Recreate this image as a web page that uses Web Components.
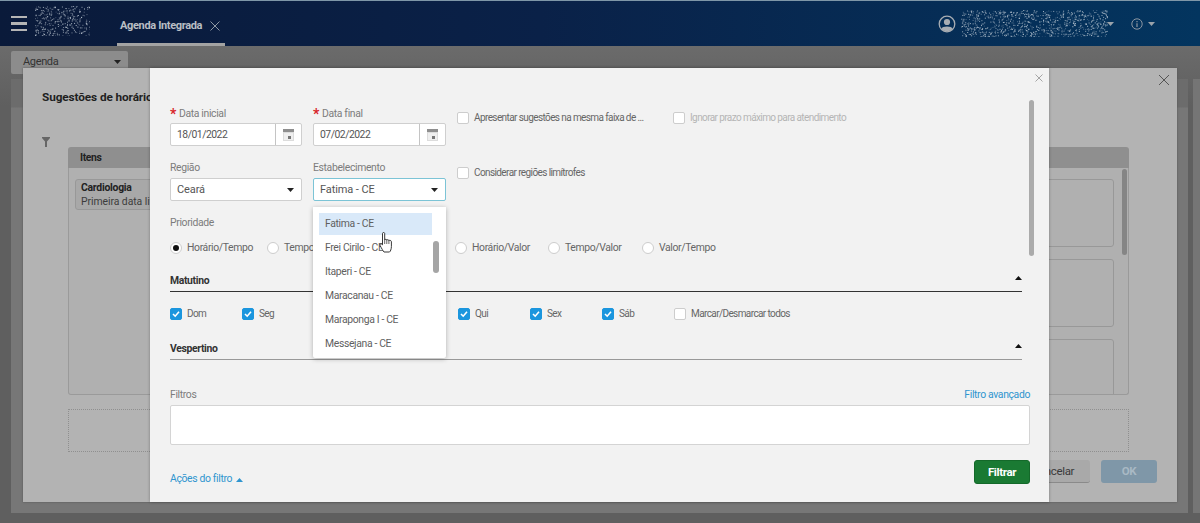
<!DOCTYPE html>
<html lang="pt-BR">
<head>
<meta charset="utf-8">
<title>Agenda Integrada</title>
<style>
  html, body { margin: 0; height: 523px; overflow: hidden; background: #636363; }
  body { font: 10.4px/14px Roboto, Lato, sans-serif; letter-spacing: -.35px; color: #555; }
</style>
</head>
<body>
<app-shell></app-shell>

<script>
// small seeded random so the blurred-out patches stay the same between runs
function seeded(seed) {
    return () => {
        seed = (seed * 16807) % 2147483647;
        return seed / 2147483647;
    };
}

const caret = (dir, color) => {
    const d = dir === 'up' ? 'M0 4 L3.5 0 L7 4Z' : 'M0 0 L7 0 L3.5 4Z';
    return `<svg width="7" height="4" viewBox="0 0 7 4"><path d="${d}" fill="${color}"/></svg>`;
};

class NoisePatch extends HTMLElement {
    connectedCallback() {
        const w = +this.getAttribute('w');
        const h = +this.getAttribute('h');
        const count = +this.getAttribute('count');
        const rnd = seeded(+this.getAttribute('seed') || 77);
        let dots = '';
        for (let i = 0; i < count; i++) {
            const x = (rnd() * w).toFixed(1);
            const y = (rnd() * h).toFixed(1);
            const o = (0.25 + rnd() * 0.6).toFixed(2);
            dots += `<rect x="${x}" y="${y}" width="1" height="1" fill="#cfd8e0" opacity="${o}"/>`;
        }
        const shadow = this.attachShadow({ mode: 'open' });
        shadow.innerHTML = `
            <style>:host { display: block; line-height: 0; }</style>
            <svg width="${w}" height="${h}">${dots}</svg>`;
    }
}

class AppHeader extends HTMLElement {
    constructor() {
        super();
        const shadow = this.attachShadow({ mode: 'open' });
        shadow.innerHTML = `
            <style>
                :host {
                    display: flex;
                    align-items: center;
                    height: 45px;
                    border-top: 1px solid #7f97a8;
                    background: linear-gradient(90deg, #0a1a3a 0%, #0a2148 45%, #03355f 100%);
                    color: #b9bec4;
                }
                .burger { width: 16px; margin: 0 8px 0 11px; display: grid; gap: 4px; }
                .burger i { display: block; height: 2.5px; background: #b5b5b5; }
                .logo { margin-top: -6px; }
                .tab {
                    align-self: stretch;
                    box-sizing: border-box;
                    width: 108px;
                    margin-left: 27px;
                    padding: 18px 0 0 3px;
                    border-bottom: 3px solid #a3a3a3;
                    font-size: 11px;
                    font-weight: 700;
                    white-space: nowrap;
                    display: flex;
                    gap: 8px;
                }
                .tab svg { margin-top: 2px; flex: none; }
                .right { margin-left: auto; display: flex; align-items: center; }
                .user { margin-right: 5px; }
                .info { margin: 0 5px 0 17px; }
                .last { margin-right: 45px; }
            </style>
            <div class="burger"><i></i><i></i><i></i></div>
            <noise-patch class="logo" w="55" h="30" count="330" seed="91"></noise-patch>
            <div class="tab">
                Agenda Integrada
                <svg width="10" height="10" viewBox="0 0 10 10"><path d="M.5 .5 L9.5 9.5 M9.5 .5 L.5 9.5" stroke="#8d97a3" fill="none"/></svg>
            </div>
            <div class="right">
                <svg class="user" width="18" height="18" viewBox="0 0 18 18">
                    <circle cx="9" cy="9" r="7.8" fill="none" stroke="#a8adb3" stroke-width="1.3"/>
                    <circle cx="9" cy="7" r="3.1" fill="#a8adb3"/>
                    <path d="M3.4 14 C4 10.8 14 10.8 14.6 14 C12 17 6 17 3.4 14Z" fill="#a8adb3"/>
                </svg>
                <noise-patch w="147" h="27" count="900" seed="4242"></noise-patch>
                <span style="margin:0 0 0 -1px;line-height:0">${caret('down', '#9aa2aa')}</span>
                <svg class="info" width="12" height="12" viewBox="0 0 12 12">
                    <circle cx="6" cy="6" r="5.2" fill="none" stroke="#8c96a2"/>
                    <path d="M6 3 V4.2 M6 5.2 V9" stroke="#8c96a2" stroke-width="1.2"/>
                </svg>
                <span class="last" style="line-height:0">${caret('down', '#9aa2aa')}</span>
            </div>`;
    }
}

class DottedBox extends HTMLElement {
    constructor() {
        super();
        this.attachShadow({ mode: 'open' }).innerHTML = `
            <style>
                :host { display: block; height: 41px; border: 1px dotted #8f8f8f; }
            </style>`;
    }
}

class ResultPanel extends HTMLElement {
    constructor() {
        super();
        const shadow = this.attachShadow({ mode: 'open' });
        shadow.innerHTML = `
            <style>
                :host { display: block; position: relative; }
                .head {
                    height: 21px;
                    padding-left: 12px;
                    background: #8f8f8f;
                    border-radius: 3px 3px 0 0;
                    color: #222;
                    font-weight: 700;
                    line-height: 21px;
                }
                .body {
                    box-sizing: border-box;
                    height: 227px;
                    padding: 11px 14px 0 6px;
                    background: #b0b0b0;
                    border: solid #9a9a9a;
                    border-width: 0 1px 1px 1px;
                    border-radius: 0 0 3px 3px;
                    overflow: hidden;
                    display: grid;
                    grid-auto-rows: 68px;
                    gap: 12px;
                }
                .bar {
                    position: absolute;
                    right: 2px;
                    top: 22px;
                    width: 5px;
                    height: 86px;
                    border-radius: 3px;
                    background: #858585;
                }
            </style>
            <div class="head"><slot name="title"></slot></div>
            <div class="body"><slot></slot></div>
            <div class="bar"></div>`;
    }
}

class ResultCard extends HTMLElement {
    constructor() {
        super();
        const shadow = this.attachShadow({ mode: 'open' });
        shadow.innerHTML = `
            <style>
                :host {
                    display: block;
                    box-sizing: border-box;
                    padding: 1px 5px;
                    border: 1px solid #989898;
                    border-radius: 3px;
                    color: #3c3c3c;
                    font-size: 10.4px;
                    letter-spacing: -.05px;
                    white-space: nowrap;
                }
                :host([compact]) { height: 31px; background: #a8a8a8; }
                ::slotted(b) { display: block; color: #222; letter-spacing: -.25px; }
            </style>
            <slot></slot>`;
    }
}

class SuggestionModal extends HTMLElement {
    constructor() {
        super();
        const shadow = this.attachShadow({ mode: 'open' });
        shadow.innerHTML = `
            <style>
                :host {
                    position: absolute;
                    left: 23px;
                    top: 68px;
                    box-sizing: border-box;
                    width: 1154px;
                    height: 434px;
                    padding: 22px 19px 0 19px;
                    background: #b3b3b3;
                    box-shadow: 0 0 2px #555;
                }
                h2 { margin: 0; font-size: 11.8px; letter-spacing: -.1px; line-height: 14px; color: #1f1f1f; }
                .close { position: absolute; right: 7px; top: 6px; }
                .content { display: grid; grid-template-columns: 26px 1fr; margin: 33px 29px 0 0; }
                .funnel { line-height: 0; }
                .panels { margin-top: 10px; display: grid; grid-template-columns: 522px 524px; gap: 15px; }
                .drops { margin-top: 14px; display: grid; grid-template-columns: 522px 524px; gap: 15px; }
                .btns { margin-top: 8px; display: flex; justify-content: flex-end; gap: 11px; margin-right: 1px; }
                .btn {
                    box-sizing: border-box;
                    width: 74px;
                    height: 23px;
                    border-radius: 3px;
                    font-size: 11.5px;
                    line-height: 22px;
                    text-align: center;
                }
                .cancel { background: #a9a9a9; color: #3a3a3a; border-bottom: 1px solid #8a8a8a; }
                .ok { width: 56px; background: #7f97a8; color: #a9b9c4; font-weight: 700; }
            </style>
            <h2>Sugestões de horário</h2>
            <svg class="close" width="12" height="12" viewBox="0 0 12 12"><path d="M1 1 L11 11 M11 1 L1 11" stroke="#555" fill="none"/></svg>
            <div class="content">
                <svg class="funnel" width="8" height="10" viewBox="0 0 8 10"><path d="M0 0 H8 V1 L5 4.5 V10 H3 V4.5 L0 1Z" fill="#666"/></svg>
                <div>
                    <div class="panels">
                        <result-panel>
                            <span slot="title">Itens</span>
                            <result-card compact><b>Cardiologia</b>Primeira data livre</result-card>
                        </result-panel>
                        <result-panel>
                            <result-card></result-card>
                            <result-card></result-card>
                            <result-card></result-card>
                        </result-panel>
                    </div>
                    <div class="drops"><dotted-box></dotted-box><dotted-box></dotted-box></div>
                </div>
            </div>
            <div class="btns">
                <div class="btn cancel">Cancelar</div>
                <div class="btn ok">OK</div>
            </div>`;
    }
}

class FieldLabel extends HTMLElement {
    constructor() {
        super();
        const shadow = this.attachShadow({ mode: 'open' });
        const star = this.hasAttribute('required') ? '<span>*</span>' : '';
        shadow.innerHTML = `
            <style>
                :host { display: block; height: 14px; margin-bottom: 4px; color: #7c7c7c; white-space: nowrap; line-height: 16px; }
                :host([required]) { line-height: 17px; }
                span { color: #d8232a; font-size: 14px; font-weight: 700; line-height: 0; margin-right: 3px; vertical-align: -2px; }
            </style>
            ${star}<slot></slot>`;
    }
}

class DateInput extends HTMLElement {
    constructor() {
        super();
        const shadow = this.attachShadow({ mode: 'open' });
        shadow.innerHTML = `
            <style>
                :host {
                    display: flex;
                    box-sizing: border-box;
                    height: 23px;
                    background: #fff;
                    border: 1px solid #cfcfcf;
                    border-radius: 2px;
                    color: #555;
                    letter-spacing: -.5px;
                    line-height: 21px;
                }
                .val { flex: 1; padding-left: 6px; }
                .btn {
                    width: 25px;
                    border-left: 1px solid #c4c4c4;
                    display: flex;
                    align-items: center;
                    justify-content: center;
                }
            </style>
            <div class="val"><slot></slot></div>
            <div class="btn">
                <svg width="11" height="12" viewBox="0 0 11 12">
                    <rect width="11" height="12" fill="#dcdcdc"/>
                    <rect width="11" height="3" fill="#8e8e8e"/>
                    <rect x="1" y="4" width="9" height="7" fill="#efefef"/>
                    <rect x="5" y="7" width="3" height="3" fill="#777"/>
                </svg>
            </div>`;
    }
}

class SelectInput extends HTMLElement {
    constructor() {
        super();
        const shadow = this.attachShadow({ mode: 'open' });
        shadow.innerHTML = `
            <style>
                :host {
                    display: flex;
                    align-items: center;
                    justify-content: space-between;
                    box-sizing: border-box;
                    height: 23px;
                    padding: 0 7px 0 6px;
                    background: #fff;
                    border: 1px solid #cfcfcf;
                    border-radius: 2px;
                    color: #555;
                    font-size: 11px;
                    letter-spacing: -.1px;
                }
                :host([focused]) { border-color: #7cc4d6; }
                svg { display: block; }
            </style>
            <slot></slot>${caret('down', '#222')}`;
    }
}

class CheckItem extends HTMLElement {
    constructor() {
        super();
        const shadow = this.attachShadow({ mode: 'open' });
        const on = this.hasAttribute('checked');
        shadow.innerHTML = `
            <style>
                :host {
                    display: flex;
                    align-items: center;
                    gap: 5px;
                    height: 14px;
                    color: #666;
                    font-size: 10px;
                    letter-spacing: -.6px;
                    white-space: nowrap;
                }
                :host([disabled]) { color: #b5b5b5; }
                .box {
                    box-sizing: border-box;
                    flex: none;
                    width: 12px;
                    height: 12px;
                    background: #fff;
                    border: 1px solid #cdcdcd;
                    border-radius: 2px;
                }
                .box.on { background: #1b96de; border-color: #1b96de; }
                svg { display: block; }
            </style>
            <div class="box ${on ? 'on' : ''}">
                ${on ? '<svg width="10" height="10" viewBox="0 0 10 10"><path d="M2 5 L4.2 7.2 L8 2.8" fill="none" stroke="#fff" stroke-width="1.6"/></svg>' : ''}
            </div>
            <slot></slot>`;
    }
}

class RadioItem extends HTMLElement {
    constructor() {
        super();
        const shadow = this.attachShadow({ mode: 'open' });
        shadow.innerHTML = `
            <style>
                :host { display: flex; align-items: center; gap: 5px; height: 14px; color: #666; white-space: nowrap; }
                .dot {
                    box-sizing: border-box;
                    flex: none;
                    width: 12px;
                    height: 12px;
                    border: 1px solid #cdcdcd;
                    border-radius: 50%;
                    background: #fff;
                    display: grid;
                    place-items: center;
                }
                .dot i { width: 6px; height: 6px; border-radius: 50%; background: #111; }
            </style>
            <div class="dot">${this.hasAttribute('checked') ? '<i></i>' : ''}</div>
            <slot></slot>`;
    }
}

class SectionTitle extends HTMLElement {
    constructor() {
        super();
        const shadow = this.attachShadow({ mode: 'open' });
        shadow.innerHTML = `
            <style>
                :host {
                    display: flex;
                    justify-content: space-between;
                    box-sizing: border-box;
                    width: 852px;
                    height: 19px;
                    padding-top: 1px;
                    border-bottom: 1px solid #333;
                    color: #333;
                    font-weight: 700;
                }
                :host([soft]) { border-color: #999; }
                span { line-height: 0; margin: 2px 0 0 0; }
            </style>
            <slot></slot><span>${caret('up', '#111')}</span>`;
    }
}

class HourDropdown extends HTMLElement {
    constructor() {
        super();
        const shadow = this.attachShadow({ mode: 'open' });
        shadow.innerHTML = `
            <style>
                :host {
                    position: absolute;
                    left: 163px;
                    top: 139px;
                    box-sizing: border-box;
                    width: 133px;
                    height: 151px;
                    padding: 6px 14px 0 6px;
                    background: #fff;
                    border-radius: 0 0 2px 2px;
                    box-shadow: 0 1px 5px rgba(0, 0, 0, .28);
                    color: #5f5f5f;
                }
                .thumb {
                    position: absolute;
                    right: 7px;
                    top: 34px;
                    width: 6px;
                    height: 32px;
                    border-radius: 3px;
                    background: #a5a5a5;
                }
                ::slotted(div) {
                    height: 22px;
                    margin-bottom: 2px;
                    padding-left: 6px;
                    line-height: 22px;
                    white-space: nowrap;
                }
                ::slotted(.current) { background: #d9e9f9; }
            </style>
            <slot></slot>
            <div class="thumb"></div>`;
    }
}

class FilterModal extends HTMLElement {
    constructor() {
        super();
        const shadow = this.attachShadow({ mode: 'open' });
        shadow.innerHTML = `
            <style>
                :host {
                    position: absolute;
                    left: 150px;
                    top: 68px;
                    box-sizing: border-box;
                    width: 899px;
                    height: 434px;
                    padding: 37px 19px 0 20px;
                    background: #f2f2f2;
                    box-shadow: 0 0 3px rgba(0, 0, 0, .3);
                }
                .close { position: absolute; right: 6px; top: 6px; }
                .scroll {
                    position: absolute;
                    right: 15px;
                    top: 32px;
                    width: 5px;
                    height: 156px;
                    border-radius: 3px;
                    background: #ababab;
                }
                .top {
                    display: grid;
                    grid-template-columns: 132px 133px 1fr;
                    column-gap: 11px;
                    row-gap: 14px;
                }
                .opts { display: flex; margin-top: 6px; }
                .opts check-item:first-child { width: 216px; }
                .prio { margin-top: 14px; }
                .radios { display: flex; margin-top: 12px; }
                .radios radio-item:nth-child(1) { width: 97px; }
                .radios radio-item:nth-child(2) { width: 188px; }
                .radios radio-item:nth-child(3) { width: 93px; }
                .radios radio-item:nth-child(4) { width: 94px; }
                .matutino { margin-top: 18px; }
                .days {
                    display: grid;
                    grid-template-columns: repeat(8, 72px);
                    margin-top: 15px;
                }
                .vespertino { margin-top: 20px; }
                .filtros {
                    margin-top: 27px;
                    padding-top: 1px;
                    display: flex;
                    justify-content: space-between;
                    height: 17px;
                }
                a { color: #2f95cf; text-decoration: none; }
                .area {
                    box-sizing: border-box;
                    height: 40px;
                    background: #fff;
                    border: 1px solid #d4d4d4;
                    border-radius: 2px;
                }
                .foot { display: flex; justify-content: space-between; align-items: flex-end; margin-top: 15px; }
                .actions { display: flex; align-items: center; gap: 4px; margin-bottom: -2px; }
                .actions svg { display: block; margin-top: 2px; }
                .filtrar {
                    box-sizing: border-box;
                    width: 56px;
                    height: 24px;
                    background: #1a7a33;
                    border: 1px solid #14692a;
                    border-radius: 3px;
                    color: #fff;
                    font-size: 11.5px;
                    font-weight: 700;
                    line-height: 22px;
                    text-align: center;
                }
            </style>
            <svg class="close" width="8" height="8" viewBox="0 0 8 8"><path d="M.5 .5 L7.5 7.5 M7.5 .5 L.5 7.5" stroke="#a5a5a5" fill="none"/></svg>
            <div class="scroll"></div>

            <div class="top">
                <div><field-label required>Data inicial</field-label><date-input>18/01/2022</date-input></div>
                <div><field-label required>Data final</field-label><date-input>07/02/2022</date-input></div>
                <div class="opts">
                    <check-item>Apresentar sugestões na mesma faixa de ...</check-item>
                    <check-item disabled>Ignorar prazo máximo para atendimento</check-item>
                </div>
                <div><field-label>Região</field-label><select-input>Ceará</select-input></div>
                <div><field-label>Estabelecimento</field-label><select-input focused>Fatima - CE</select-input></div>
                <div class="opts"><check-item>Considerar regiões limítrofes</check-item></div>
            </div>

            <field-label class="prio">Prioridade</field-label>
            <div class="radios">
                <radio-item checked>Horário/Tempo</radio-item>
                <radio-item>Tempo/</radio-item>
                <radio-item>Horário/Valor</radio-item>
                <radio-item>Tempo/Valor</radio-item>
                <radio-item>Valor/Tempo</radio-item>
            </div>

            <section-title class="matutino">Matutino</section-title>
            <div class="days">
                <check-item checked>Dom</check-item>
                <check-item checked>Seg</check-item>
                <span></span>
                <span></span>
                <check-item checked>Qui</check-item>
                <check-item checked>Sex</check-item>
                <check-item checked>Sáb</check-item>
                <check-item>Marcar/Desmarcar todos</check-item>
            </div>

            <section-title class="vespertino" soft>Vespertino</section-title>

            <div class="filtros"><span style="color:#7c7c7c">Filtros</span><a>Filtro avançado</a></div>
            <div class="area"></div>

            <div class="foot">
                <a class="actions">Ações do filtro ${caret('up', '#2f95cf')}</a>
                <div class="filtrar">Filtrar</div>
            </div>

            <hour-dropdown>
                <div class="current">Fatima - CE</div>
                <div>Frei Cirilo - CE</div>
                <div>Itaperi - CE</div>
                <div>Maracanau - CE</div>
                <div>Maraponga I - CE</div>
                <div>Messejana - CE</div>
            </hour-dropdown>

            <!-- mouse pointer caught in the screenshot -->
            <svg style="position:absolute;left:229px;top:164px" width="14" height="21" viewBox="0 0 14 21">
                <path d="M3.5 1.5 C3.5 .2 5.7 .2 5.7 1.5 V8 C6 7 7.7 7 7.8 8.2 C8.2 7.3 9.8 7.5 9.9 8.7 C10.4 8 12.3 8.3 12.4 9.7 V14.5 C12.4 17 11.4 19.5 10.5 20 H5 C4 19 2.7 16.5 1.2 13.7 C.3 12 1.8 11 3.5 12.8Z" fill="#fff" stroke="#222" stroke-width=".9"/>
                <path d="M5.7 8 V12 M7.8 8.2 V12 M9.9 8.7 V12" stroke="#222" stroke-width=".7" fill="none"/>
            </svg>`;
    }
}

class AppShell extends HTMLElement {
    constructor() {
        super();
        const shadow = this.attachShadow({ mode: 'open' });
        shadow.innerHTML = `
            <style>
                :host { display: block; position: relative; height: 523px; overflow: hidden; }
                .main { padding: 5px 0 0 11px; background: linear-gradient(180deg, #6b6b6b 0, #5f5f5f 60px); height: 472px; }
                .agenda {
                    display: flex;
                    align-items: center;
                    justify-content: space-between;
                    box-sizing: border-box;
                    width: 117px;
                    height: 23px;
                    padding: 0 7px 1px 12px;
                    background: #8c8c8c;
                    border-radius: 2px;
                    color: #333;
                    font-size: 11px;
                }
                .row { display: flex; gap: 5px; margin-top: 5px; height: 434px; }
                .back { width: 1177px; background: linear-gradient(180deg, #6c6c6c 0, #6c6c6c 28px, #777 29px); }
                .next { flex: 1; background: #757575; }
            </style>
            <app-header></app-header>
            <div class="main">
                <div class="agenda">Agenda ${caret('down', '#222')}</div>
                <div class="row"><div class="back"></div><div class="next"></div></div>
            </div>
            <suggestion-modal></suggestion-modal>
            <filter-modal></filter-modal>`;
    }
}

customElements.define('noise-patch', NoisePatch);
customElements.define('app-header', AppHeader);
customElements.define('dotted-box', DottedBox);
customElements.define('result-card', ResultCard);
customElements.define('result-panel', ResultPanel);
customElements.define('suggestion-modal', SuggestionModal);
customElements.define('field-label', FieldLabel);
customElements.define('date-input', DateInput);
customElements.define('select-input', SelectInput);
customElements.define('check-item', CheckItem);
customElements.define('radio-item', RadioItem);
customElements.define('section-title', SectionTitle);
customElements.define('hour-dropdown', HourDropdown);
customElements.define('filter-modal', FilterModal);
customElements.define('app-shell', AppShell);
</script>
</body>
</html>
